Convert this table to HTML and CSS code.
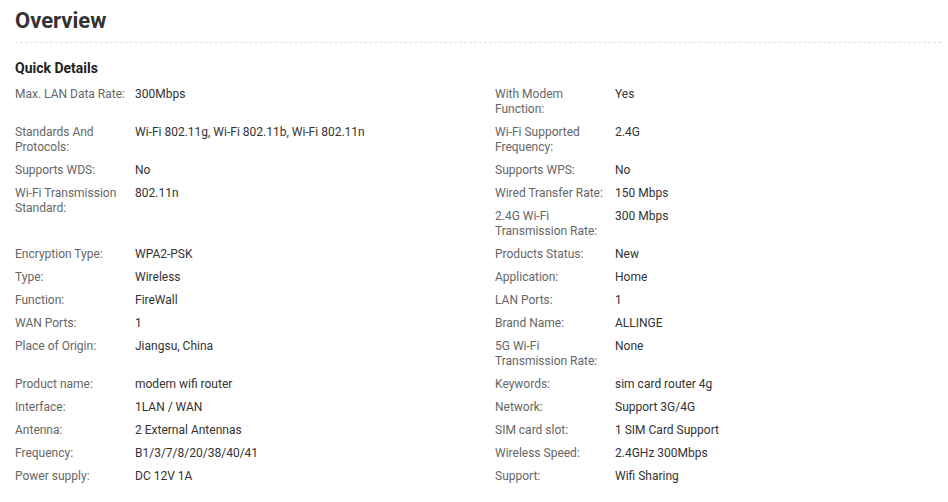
FILE: index.html
```html
<!DOCTYPE html>
<html>
<head>
<meta charset="utf-8">
<link rel="stylesheet" href="styles.css">
</head>
<body>
<div class="page">
  <h1 class="title">Overview</h1>
  <h2 class="subtitle">Quick Details</h2>
  <div class="details">
    <div class="item"><span class="label">Max. LAN Data Rate:</span><span class="value">300Mbps</span></div>
    <div class="item"><span class="label">With Modem Function:</span><span class="value">Yes</span></div>
    <div class="item"><span class="label">Standards And Protocols:</span><span class="value">Wi-Fi 802.11g, Wi-Fi 802.11b, Wi-Fi 802.11n</span></div>
    <div class="item"><span class="label">Wi-Fi Supported Frequency:</span><span class="value">2.4G</span></div>
    <div class="item"><span class="label">Supports WDS:</span><span class="value">No</span></div>
    <div class="item"><span class="label">Supports WPS:</span><span class="value">No</span></div>
    <div class="item span2"><span class="label">Wi-Fi Transmission Standard:</span><span class="value">802.11n</span></div>
    <div class="item"><span class="label">Wired Transfer Rate:</span><span class="value">150 Mbps</span></div>
    <div class="item"><span class="label">2.4G Wi-Fi Transmission Rate:</span><span class="value">300 Mbps</span></div>
    <div class="item"><span class="label">Encryption Type:</span><span class="value">WPA2-PSK</span></div>
    <div class="item"><span class="label">Products Status:</span><span class="value">New</span></div>
    <div class="item"><span class="label">Type:</span><span class="value">Wireless</span></div>
    <div class="item"><span class="label">Application:</span><span class="value">Home</span></div>
    <div class="item"><span class="label">Function:</span><span class="value">FireWall</span></div>
    <div class="item"><span class="label">LAN Ports:</span><span class="value">1</span></div>
    <div class="item"><span class="label">WAN Ports:</span><span class="value">1</span></div>
    <div class="item"><span class="label">Brand Name:</span><span class="value">ALLINGE</span></div>
    <div class="item"><span class="label">Place of Origin:</span><span class="value">Jiangsu, China</span></div>
    <div class="item"><span class="label">5G Wi-Fi Transmission Rate:</span><span class="value">None</span></div>
    <div class="item"><span class="label">Product name:</span><span class="value">modem wifi router</span></div>
    <div class="item"><span class="label">Keywords:</span><span class="value">sim card router 4g</span></div>
    <div class="item"><span class="label">Interface:</span><span class="value">1LAN / WAN</span></div>
    <div class="item"><span class="label">Network:</span><span class="value">Support 3G/4G</span></div>
    <div class="item"><span class="label">Antenna:</span><span class="value">2 External Antennas</span></div>
    <div class="item"><span class="label">SIM card slot:</span><span class="value">1 SIM Card Support</span></div>
    <div class="item"><span class="label">Frequency:</span><span class="value">B1/3/7/8/20/38/40/41</span></div>
    <div class="item"><span class="label">Wireless Speed:</span><span class="value">2.4GHz 300Mbps</span></div>
    <div class="item"><span class="label">Power supply:</span><span class="value">DC 12V 1A</span></div>
    <div class="item"><span class="label">Support:</span><span class="value">Wifi Sharing</span></div>
  </div>
</div>
</body>
</html>
```
FILE: styles.css
```css
html, body {
  margin: 0;
  padding: 0;
  background: #fff;
}
body {
  font-family: Roboto, "Liberation Sans", Arial, sans-serif;
  color: #333;
}
.page {
  padding: 0 7px 0 15px;
}
.title {
  margin: 0;
  padding: 8px 0 8px;
  font-size: 22px;
  line-height: 26px;
  font-weight: 700;
  color: #333;
  border-bottom: 1px dashed #e0e0e0;
}
.subtitle {
  margin: 0;
  padding: 16px 0 6px;
  font-size: 14px;
  line-height: 18px;
  font-weight: 700;
  color: #222;
}
.details {
  display: grid;
  grid-template-columns: 480px 1fr;
  grid-auto-flow: row dense;
}
.item {
  display: flex;
  padding: 4px 0;
  font-size: 12px;
  line-height: 15px;
}
.span2 {
  grid-row: span 2;
}
.label {
  flex: 0 0 112px;
  margin-right: 8px;
  color: #666;
}
.value {
  flex: 1;
  color: #333;
}
```
